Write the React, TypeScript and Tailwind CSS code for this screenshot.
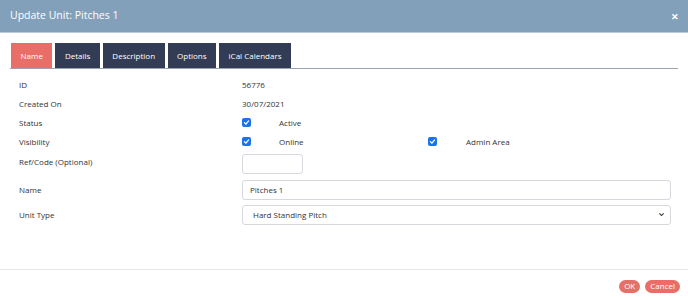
import React from "react";

const font = { fontFamily: '"Open Sans", "Noto Sans", sans-serif' };

function Check() {
  return (
    <span className="inline-flex h-[9px] w-[9px] items-center justify-center rounded-[2px] bg-[#1a73e8]">
      <svg width="7" height="7" viewBox="0 0 10 10">
        <path d="M2 5.2 L4.2 7.4 L8 2.8" stroke="white" strokeWidth="1.8" fill="none" strokeLinecap="round" strokeLinejoin="round" />
      </svg>
    </span>
  );
}

function Row({ label, children, h }: { label: string; children?: React.ReactNode; h: string }) {
  return (
    <div className={`flex items-center ${h}`}>
      <div className="w-[242px] pl-[19px] text-[8px] text-[#333]">{label}</div>
      <div className="flex flex-1 items-center pr-[17px] text-[8px] text-[#333]">{children}</div>
    </div>
  );
}

export default function App() {
  const tabs = ["Name", "Details", "Description", "Options", "iCal Calendars"];
  return (
    <div className="h-[300px] w-[688px] overflow-hidden bg-white" style={font}>
      <div className="flex h-[33px] items-center justify-between border-b border-[#b9c9d8] bg-[#83a0ba] pl-[10px] pr-[9px]">
        <span className="text-[10.5px] text-white">Update Unit: Pitches 1</span>
        <span className="text-[9px] font-bold leading-none text-white">✕</span>
      </div>
      <div className="mx-[10px] mt-[10px] flex h-[26px] gap-[3px] border-b border-[#9aa4ae] pl-[1px]">
        {tabs.map((t, i) => (
          <div
            key={t}
            className={`flex items-center justify-center px-[9.5px] text-[8px] text-white ${i === 0 ? "bg-[#ea6e68]" : "bg-[#323d55]"}`}
          >
            {t}
          </div>
        ))}
      </div>
      <div className="pt-[6px]">
        <Row label="ID" h="h-[19px]">56776</Row>
        <Row label="Created On" h="h-[19px]">30/07/2021</Row>
        <Row label="Status" h="h-[19px]">
          <Check />
          <span className="ml-[28px]">Active</span>
        </Row>
        <Row label="Visibility" h="h-[19px]">
          <div className="flex w-[186px] items-center">
            <Check />
            <span className="ml-[28px]">Online</span>
          </div>
          <Check />
          <span className="ml-[29px]">Admin Area</span>
        </Row>
        <Row label="Ref/Code (Optional)" h="h-[22px]">
          <div className="mt-[3px] h-[20px] w-[61px] rounded-[3px] border border-[#d5d9dd]" />
        </Row>
        <div className="h-[6px]" />
        <Row label="Name" h="h-[21px]">
          <div className="flex h-[20px] flex-1 items-center rounded-[3px] border border-[#d5d9dd] pl-[7px]">Pitches 1</div>
        </Row>
        <div className="h-[4px]" />
        <Row label="Unit Type" h="h-[21px]">
          <div className="flex h-[20px] flex-1 items-center justify-between rounded-[3px] border border-[#d5d9dd] pl-[10px] pr-[5px]">
            <span>Hard Standing Pitch</span>
            <svg width="7" height="7" viewBox="0 0 10 10">
              <path d="M2 3.5 L5 6.5 L8 3.5" stroke="#333" strokeWidth="1.6" fill="none" />
            </svg>
          </div>
        </Row>
      </div>
      <div className="mt-[44px] flex h-[31px] items-center justify-end gap-[5px] border-t border-[#e5e7ea] pr-[8px] pt-[2px]">
        <span className="flex h-[13px] items-center rounded-full bg-[#ea6e68] px-[5px] text-[8px] text-white">OK</span>
        <span className="flex h-[13px] items-center rounded-full bg-[#ea6e68] px-[5px] text-[8px] text-white">Cancel</span>
      </div>
    </div>
  );
}
